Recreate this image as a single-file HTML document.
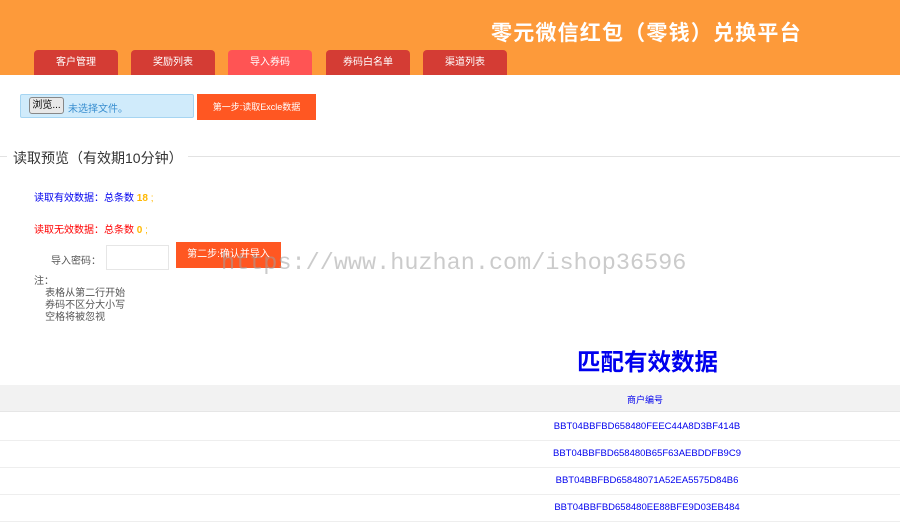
<!DOCTYPE html>
<html><head><meta charset="utf-8"><style>
*{margin:0;padding:0;box-sizing:border-box}
body{width:900px;height:523px;overflow:hidden;background:#fff;font-family:"Liberation Sans","Noto Sans CJK SC",sans-serif;font-size:10px;color:#333;position:relative}
.hd{position:absolute;left:0;top:0;width:900px;height:75px;background:#fd9a3a}
.title{position:absolute;left:491px;top:17px;color:#fff;font-size:21px;font-weight:bold;white-space:nowrap;letter-spacing:1.2px}
.tab{position:absolute;top:50px;width:84px;height:25px;background:#d43c34;border-radius:4px 4px 0 0;color:#fff;text-align:center;line-height:26px;font-size:10px}
.abs{position:absolute;white-space:nowrap}
</style></head><body>
<div class="hd">
<div class="title">零元微信红包（零钱）兑换平台</div>
<div class="tab" style="left:34px">客户管理</div>
<div class="tab" style="left:131px">奖励列表</div>
<div class="tab" style="left:228px;background:#ff5454">导入券码</div>
<div class="tab" style="left:326px">券码白名单</div>
<div class="tab" style="left:423px">渠道列表</div>
</div>
<div class="abs" style="left:20px;top:94px;width:174px;height:24px;background:#d0ebfb;border:1px solid #a6d5f2;border-radius:2px"></div>
<div class="abs" style="left:29px;top:97px;width:35px;height:17px;background:#e8e8e8;border:1px solid #888;border-radius:3px;font-size:10px;line-height:15px;text-align:center;color:#000">浏览...</div>
<div class="abs" style="left:68px;top:100px;color:#3a8fd0;font-size:10px">未选择文件。</div>
<div class="abs" style="left:197px;top:94px;width:119px;height:26px;background:#ff5722;color:#fff;text-align:center;line-height:26px;font-size:9px">第一步:读取Excle数据</div>
<div class="abs" style="left:0;top:156px;width:7px;border-top:1px solid #e2e2e2"></div>
<div class="abs" style="left:188px;top:156px;width:712px;border-top:1px solid #e2e2e2"></div>
<div class="abs" style="left:13px;top:148px;font-size:14px;color:#333">读取预览（有效期10分钟）</div>
<div class="abs" style="left:34px;top:189px;color:#0000ee">读取有效数据：总条数 <b style="color:#ffb800">18</b> <span style="color:#ffb800">;</span></div>
<div class="abs" style="left:34px;top:221px;color:#ff0000">读取无效数据：总条数 <b style="color:#ffb800">0</b> <span style="color:#ffb800">;</span></div>
<div class="abs" style="left:51px;top:252px;color:#555">导入密码：</div>
<div class="abs" style="left:106px;top:245px;width:63px;height:25px;border:1px solid #e6e6e6"></div>
<div class="abs" style="left:176px;top:242px;width:105px;height:26px;background:#ff5722;color:#fff;text-align:center;line-height:26px;font-size:10px">第二步:确认并导入</div>
<div class="abs" style="left:221px;top:250px;font-family:'Liberation Mono',monospace;font-size:23.5px;color:rgba(160,160,160,0.55)">https://www.huzhan.com/ishop36596</div>
<div class="abs" style="left:34px;top:276px;color:#555;line-height:12px">注：<br>&nbsp;&nbsp;&nbsp;&nbsp;表格从第二行开始<br>&nbsp;&nbsp;&nbsp;&nbsp;券码不区分大小写<br>&nbsp;&nbsp;&nbsp;&nbsp;空格将被忽视</div>
<div class="abs" style="left:577px;top:343px;font-size:23.5px;font-weight:bold;color:#0000ee">匹配有效数据</div>
<div class="abs" style="left:0;top:385px;width:900px;height:27px;background:#f2f2f2;border-bottom:1px solid #e6e6e6"></div>
<div class="abs" style="left:627px;top:393px;color:#0000ee;font-size:9px">商户编号</div>
<div class="abs" style="left:0;top:440px;width:900px;border-top:1px solid #eee"></div>
<div class="abs" style="left:0;top:467px;width:900px;border-top:1px solid #eee"></div>
<div class="abs" style="left:0;top:494px;width:900px;border-top:1px solid #eee"></div>
<div class="abs" style="left:0;top:521px;width:900px;border-top:1px solid #eee"></div>
<div class="abs" style="left:447px;width:400px;text-align:center;top:421px;color:#0000ee;font-size:9.5px">BBT04BBFBD658480FEEC44A8D3BF414B</div>
<div class="abs" style="left:447px;width:400px;text-align:center;top:448px;color:#0000ee;font-size:9.5px">BBT04BBFBD658480B65F63AEBDDFB9C9</div>
<div class="abs" style="left:447px;width:400px;text-align:center;top:475px;color:#0000ee;font-size:9.5px">BBT04BBFBD65848071A52EA5575D84B6</div>
<div class="abs" style="left:447px;width:400px;text-align:center;top:502px;color:#0000ee;font-size:9.5px">BBT04BBFBD658480EE88BFE9D03EB484</div>
</body></html>
